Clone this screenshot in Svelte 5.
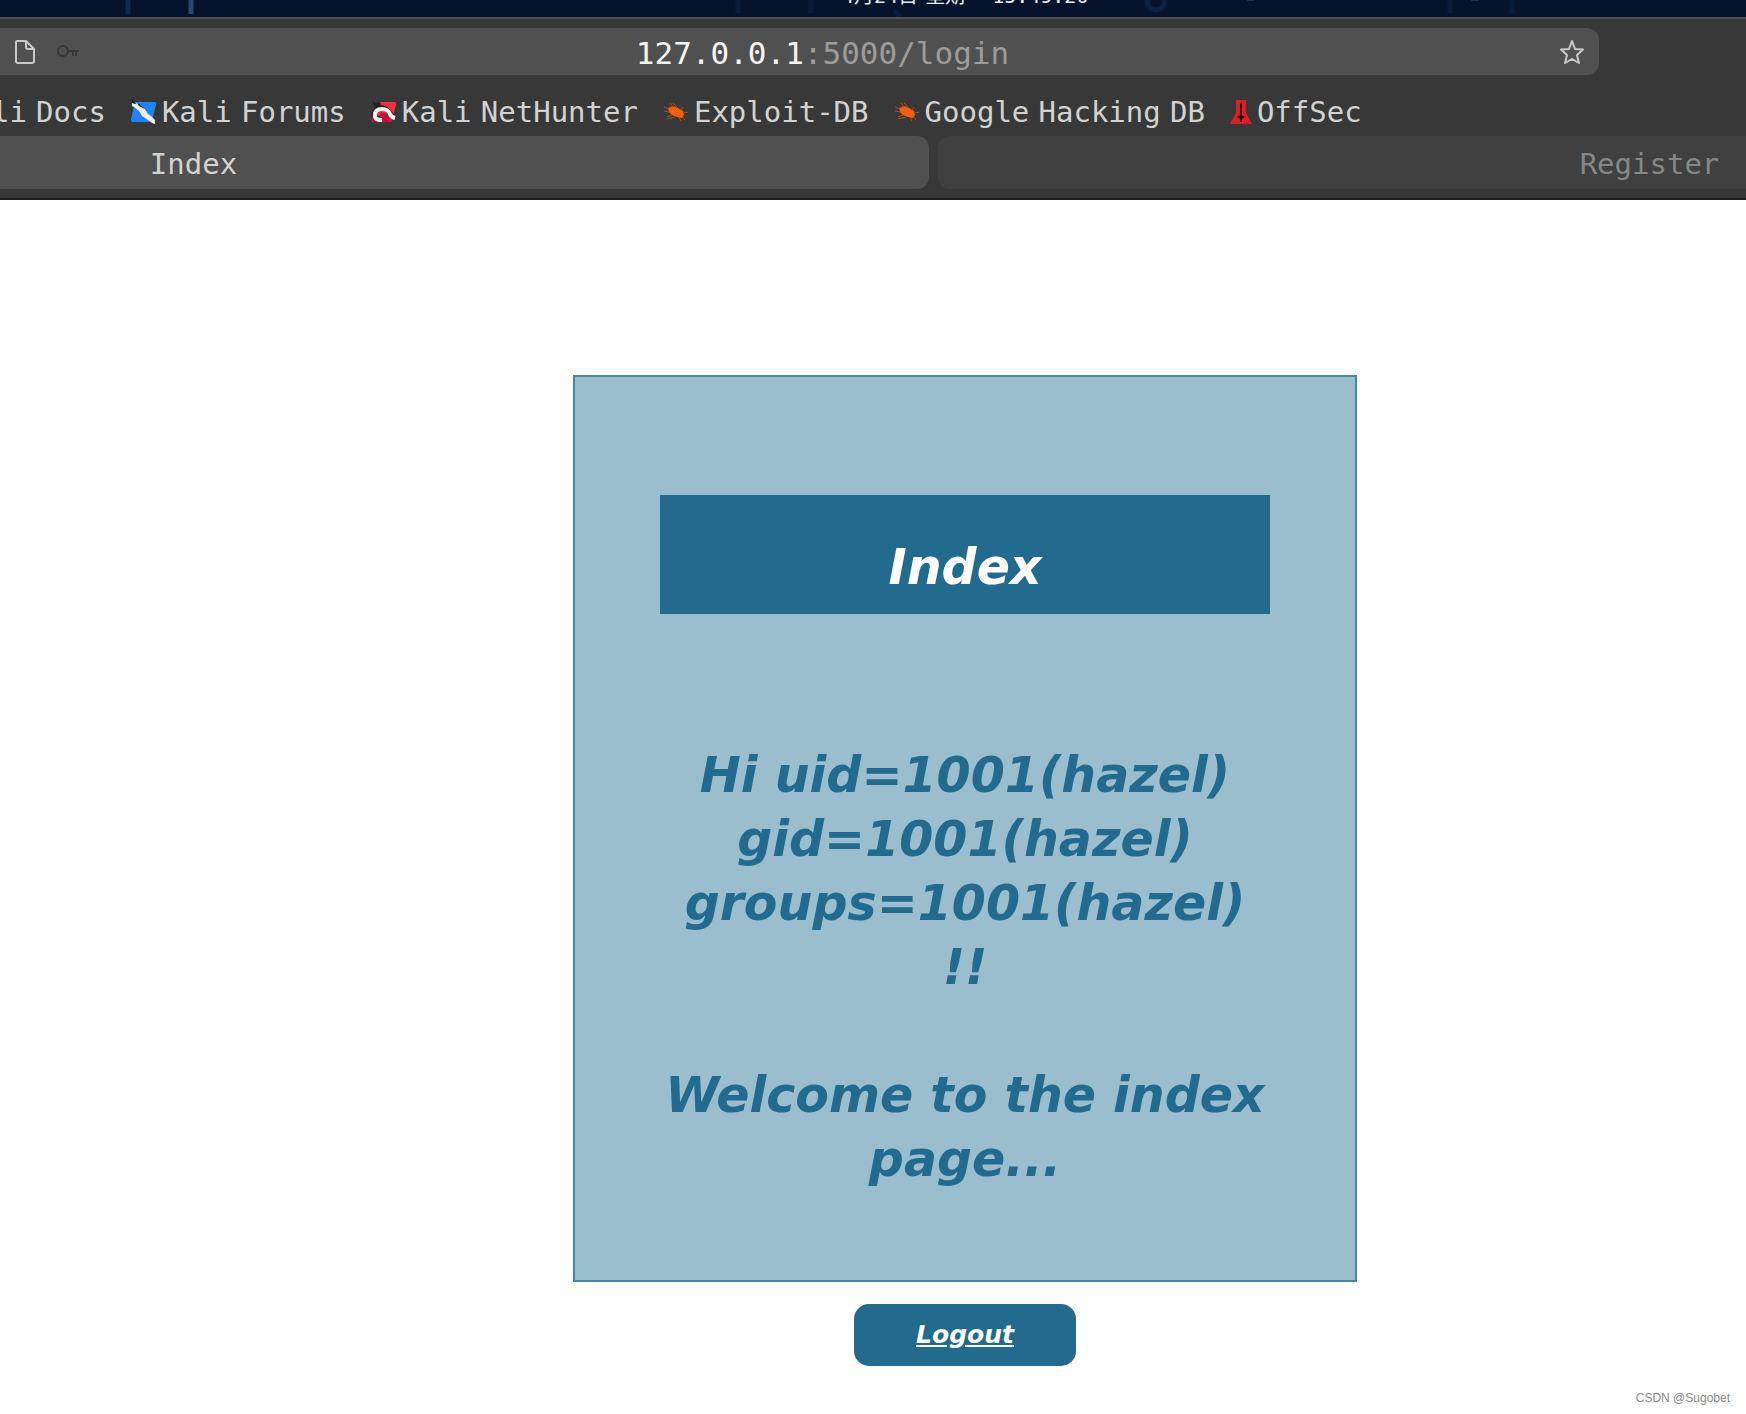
<script>
  const bookmarks = [
    { name: 'Kali Docs', icon: '' },
    { name: 'Kali Forums', icon: 'forums' },
    { name: 'Kali NetHunter', icon: 'nethunter' },
    { name: 'Exploit-DB', icon: 'bug' },
    { name: 'Google Hacking DB', icon: 'bug' },
    { name: 'OffSec', icon: 'offsec' },
  ]
  let url = '127.0.0.1:5000/login'
  let host = url.split(':')[0]
  let path = url.slice(host.length)
</script>

<div class="desktop">
  <svg class="wallpaper" viewBox="0 0 1746 17" preserveAspectRatio="xMinYMin slice" aria-hidden="true">
    <path d="M128 0v14" stroke="#0f2a4d" stroke-width="5" />
    <path d="M191 0v14" stroke="#254976" stroke-width="5" />
    <path d="M738 0v13M811 0v13M1450 0v13M1512 0v14" stroke="#0a1c3b" stroke-width="5" />
    <path d="M895 10l5 7" stroke="#0a1c3b" stroke-width="5" />
    <path d="M1147 0c0 13 18 13 18 0" fill="none" stroke="#0d2242" stroke-width="5" />
    <path d="M1247 0h7M1471 0h8" stroke="#17365c" stroke-width="2" />
  </svg>
  <div class="clock"><span>4月24日</span><span>星期一</span><span>15:49:20</span></div>
</div>

<header>
  <div class="urlbar">
    <svg class="page-icon" width="22" height="26" viewBox="0 0 22 26" fill="none" stroke="#c9c9c9" stroke-width="2" stroke-linejoin="round">
      <path d="M3 2h9l8 8v12q0 2-2 2H4q-2 0-2-2V3q0-1 1-1zM12 2v6q0 2 2 2h6" />
    </svg>
    <svg class="key-icon" width="24" height="16" viewBox="0 0 24 16" fill="none" stroke="#383838" stroke-width="2">
      <circle cx="7" cy="7" r="5" />
      <path d="M12 7h11M17 7v5M20 7v5" />
    </svg>
    <p class="address"><b>{host}</b>{path}</p>
    <button class="star" aria-label="Bookmark this page">
      <svg width="26" height="26" viewBox="0 0 26 26" fill="none" stroke="#c9c9c9" stroke-width="2" stroke-linejoin="round">
        <path d="M13 2l3 8 8 .5-6 5.500 2 8-7-4-7 4 2-8-6-5.500 8-.5z" />
      </svg>
    </button>
  </div>

  <nav class="bookmarks">
    {#each bookmarks as bookmark}
      <a href="#{bookmark.icon}">
        {#if bookmark.icon == 'forums'}
          <svg width="26" height="26" viewBox="0 0 26 26">
            <path d="M4 3h19q3 0 2 3l-4 15q-1 2-3 2H2q-2 0-2-3z" fill="#1f83fb" />
            <path d="M1 0l3 4 4 1 5 4 3 3-3 1-9-6-3-2z" fill="#1b1b1b" />
            <path d="M1 4l3 1 2-1 2 3 6 3 3 5 3 2 4 4v4l-3-1-4-3-6-4-3-5-5-4-2-1z" fill="#f1f3f1" />
          </svg>
        {:else if bookmark.icon == 'nethunter'}
          <svg width="26" height="26" viewBox="0 0 26 26">
            <path d="M8 3h15q3 0 2 3l-4 15q-1 2-3 2H3q-3 0-2-3z" fill="#f4303a" />
            <path d="M1 17l6 1 3-5 6 2 4 6q-1 2-3 2H3q-3 0-3-3z" fill="#c3123f" />
            <path d="M1 2l4 2 4-1 1 3-6 3z" fill="#222" />
            <path d="M9 20q-8-1-5-7 6-8 13-1 3 4 6 7" fill="none" stroke="#2a1a1f" stroke-width="5" />
            <path d="M11 21q-8 0-7-5 0-6 7-6 6 0 8 5 1 3 5 4" fill="none" stroke="#f6f2f2" stroke-width="4" />
          </svg>
        {:else if bookmark.icon == 'bug'}
          <svg width="26" height="26" viewBox="0 0 26 26">
            <path d="M5 9l5-2 5 2 5 3 1 4-2 3-5-1-5-2-3-3z" fill="#f2600c" />
            <path d="M6 10L1 8M6 13l-5-1M9 16l-5 2M12 18l-8 2M10 8L7 4M14 8l-4-4M18 11l2-3M21 14l4-1M20 18l2 3M16 18l2 4" fill="none" stroke="#b5500f" />
          </svg>
        {:else if bookmark.icon == 'offsec'}
          <svg width="22" height="26" viewBox="0 0 22 26">
            <path d="M6 1h10v13l6 11H0l6-11z" fill="#dc2027" />
            <path d="M10 6l1-3 1 3v10l3 2-3 2v3h-2v-3l-3-2 3-2z" fill="#3a0508" />
          </svg>
        {/if}
        <span class="name">
          {#each bookmark.name.split(' ') as word, i}{#if i}<span class="space">{' '}</span>{/if}{word}{/each}
        </span>
      </a>
    {/each}
  </nav>

  <div class="tabs" role="tablist">
    <button class="tab active" role="tab" aria-selected="true">Index</button>
    <button class="tab" role="tab" aria-selected="false">Register</button>
  </div>
</header>

<main>
  <section class="card">
    <h1>Index</h1>
    <h2>Hi uid=1001(hazel) gid=1001(hazel) groups=1001(hazel) !!<br /><br />Welcome to the index page...</h2>
  </section>
  <a class="logout" href="#logout">Logout</a>
</main>

<footer>CSDN @Sugobet</footer>

<style>
  :global(body) {
    margin: 0;
    background: #fff;
    overflow-x: hidden;
  }

  .desktop {
    position: relative;
    height: 17px;
    overflow: hidden;
    background: #06132c;
  }

  .wallpaper {
    display: block;
    width: 100%;
    height: 17px;
  }

  .clock {
    position: absolute;
    top: -18px;
    left: 842px;
    display: flex;
    gap: 7px;
    color: #e8ecf2;
    font: 20px/28px "DejaVu Sans Mono", "Noto Sans CJK SC", monospace;
    white-space: nowrap;
  }

  header {
    background: #383838;
    border-top: 2px solid #505050;
    border-bottom: 2px solid #1c1c1c;
    padding: 9px 0;
    overflow: hidden;
    color: #d2d2d2;
    font-family: "DejaVu Sans Mono", monospace;
    font-size: 29px;
  }

  .urlbar {
    display: flex;
    align-items: center;
    height: 47px;
    margin-right: 147px;
    padding: 0 14px;
    background: #505050;
    border-radius: 0 12px 12px 0;
  }

  .key-icon {
    margin-left: 20px;
  }

  .address {
    flex: 1;
    margin: 0;
    padding: 3px 0 0 6px;
    text-align: center;
    color: #9c9c9c;
    font-size: 31px;
    line-height: 44px;
  }

  .address b {
    color: #f4f4f4;
    font-weight: normal;
  }

  .star {
    display: flex;
    padding: 0;
    border: 0;
    background: none;
  }

  .bookmarks {
    display: flex;
    gap: 25px;
    height: 61px;
    margin-left: -43px;
    white-space: nowrap;
  }

  .bookmarks a {
    display: flex;
    align-items: center;
    gap: 5px;
    padding-top: 13px;
    color: inherit;
    line-height: 34px;
    text-decoration: none;
  }

  .space {
    font-family: "DejaVu Sans", sans-serif;
    white-space: pre;
  }

  /* the strip runs past both sides of the window */
  .tabs {
    display: flex;
    gap: 9px;
    margin: 0 -639px 0 -518px;
  }

  .tab {
    flex: 1;
    height: 53px;
    padding: 2px 24px 0 0;
    border: 0;
    border-radius: 12px;
    background: #404040;
    color: #858888;
    font: inherit;
  }

  .tab.active {
    background: #505050;
    color: #d2d2d2;
  }

  main {
    display: flex;
    flex-direction: column;
    align-items: center;
    padding: 175px 0 0 184px;
    font-family: "DejaVu Sans", sans-serif;
    font-style: italic;
    font-weight: bold;
  }

  .card {
    box-sizing: border-box;
    width: 784px;
    padding: 118px 85px 88px;
    border: 2px solid #4788a5;
    background: #9abecd;
    text-align: center;
  }

  h1,
  h2 {
    margin: 0;
    font-size: 49px;
    line-height: 64px;
  }

  h1 {
    padding: 41px 0 14px;
    background: #226a8e;
    color: #fff;
  }

  h2 {
    margin-top: 130px;
    color: #226a8e;
  }

  .logout {
    width: 222px;
    margin-top: 22px;
    border-radius: 15px;
    background: #226a8e;
    color: #fff;
    font-size: 25px;
    line-height: 62px;
    text-align: center;
  }

  footer {
    padding: 23px 16px 7px;
    text-align: right;
    color: #8a8a8a;
    font: 12px/18px "Liberation Sans", Arial, sans-serif;
  }
</style>
